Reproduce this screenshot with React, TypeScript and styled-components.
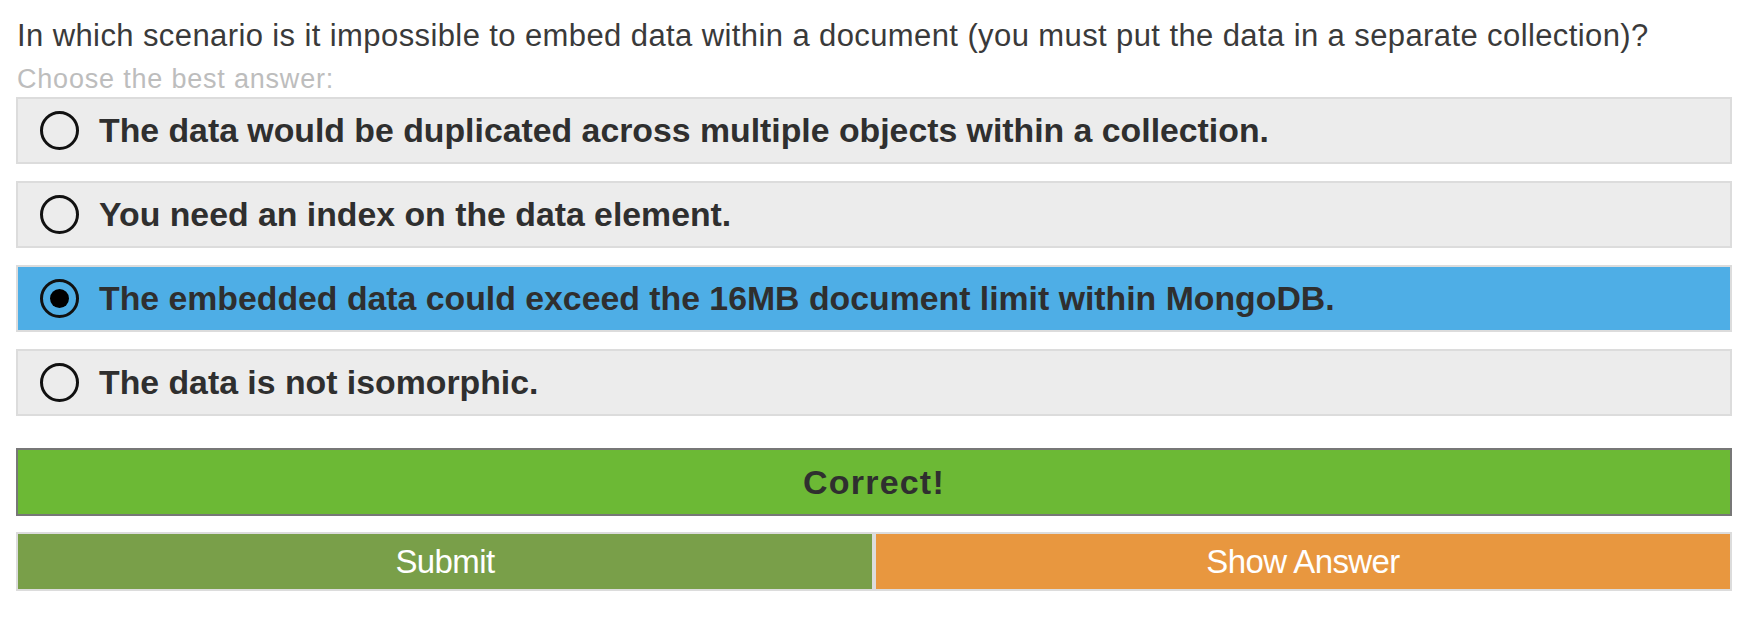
import React from "react";
import styled, { createGlobalStyle } from "styled-components";

const Global = createGlobalStyle`
  html, body { margin: 0; padding: 0; background: #fff; }
  body { font-family: "Liberation Sans", Arial, sans-serif; }
`;

const Page = styled.div`
  padding: 18px 19px 16px 16px;
  display: flex;
  flex-direction: column;
`;

const Question = styled.div`
  font-size: 31px;
  line-height: 36px;
  color: #3a3a3a;
  font-weight: 300;
  letter-spacing: 0.4px;
  padding-left: 1px;
  white-space: nowrap;
`;

const Hint = styled.div`
  margin-top: 7px;
  font-size: 27px;
  line-height: 36px;
  color: #bdbdbd;
  letter-spacing: 0.8px;
  padding-left: 1px;
`;

const Options = styled.div`
  display: flex;
  flex-direction: column;
  gap: 17px;
`;

const Option = styled.label<{ $selected?: boolean }>`
  display: flex;
  align-items: center;
  height: 63px;
  border: 2px solid #dcdcdc;
  background: ${(p) => (p.$selected ? "#4eaee6" : "#ececec")};
  padding-left: 22px;
  gap: 20px;
  cursor: pointer;
`;

const Radio = styled.span<{ $checked?: boolean }>`
  width: 39px;
  height: 39px;
  box-sizing: border-box;
  border-radius: 50%;
  border: 3.5px solid #111;
  display: flex;
  align-items: center;
  justify-content: center;
  flex: none;
  &::after {
    content: "";
    display: ${(p) => (p.$checked ? "block" : "none")};
    width: 19px;
    height: 19px;
    border-radius: 50%;
    background: #000;
  }
`;

const OptionText = styled.span`
  font-weight: 700;
  font-size: 33.8px;
  color: #2f2f2f;
  white-space: nowrap;
`;

const Feedback = styled.div`
  margin-top: 32px;
  height: 64px;
  border: 2px solid #777;
  background: #6cb935;
  display: flex;
  align-items: center;
  justify-content: center;
  font-weight: 700;
  font-size: 34px;
  letter-spacing: 1.2px;
  color: #2f2f2f;
`;

const Buttons = styled.div`
  margin-top: 16px;
  display: grid;
  grid-template-columns: 1fr 1fr;
`;

const Button = styled.button<{ $bg: string }>`
  height: 59px;
  border: 2px solid #dcdcdc;
  background: ${(p) => p.$bg};
  color: #fff;
  font-family: "Liberation Sans", Arial, sans-serif;
  font-size: 33px;
  font-weight: 400;
  letter-spacing: -0.6px;
  padding: 0;
  cursor: pointer;
`;

const options = [
  "The data would be duplicated across multiple objects within a collection.",
  "You need an index on the data element.",
  "The embedded data could exceed the 16MB document limit within MongoDB.",
  "The data is not isomorphic.",
];

export default function App() {
  const selected = 2;
  return (
    <>
      <Global />
      <Page>
        <Question>
          In which scenario is it impossible to embed data within a document (you must put the data in a separate collection)?
        </Question>
        <Hint>Choose the best answer:</Hint>
        <Options>
          {options.map((o, i) => (
            <Option key={i} $selected={i === selected}>
              <Radio $checked={i === selected} />
              <OptionText>{o}</OptionText>
            </Option>
          ))}
        </Options>
        <Feedback>Correct!</Feedback>
        <Buttons>
          <Button $bg="#799f49">Submit</Button>
          <Button $bg="#e8973f">Show Answer</Button>
        </Buttons>
      </Page>
    </>
  );
}
